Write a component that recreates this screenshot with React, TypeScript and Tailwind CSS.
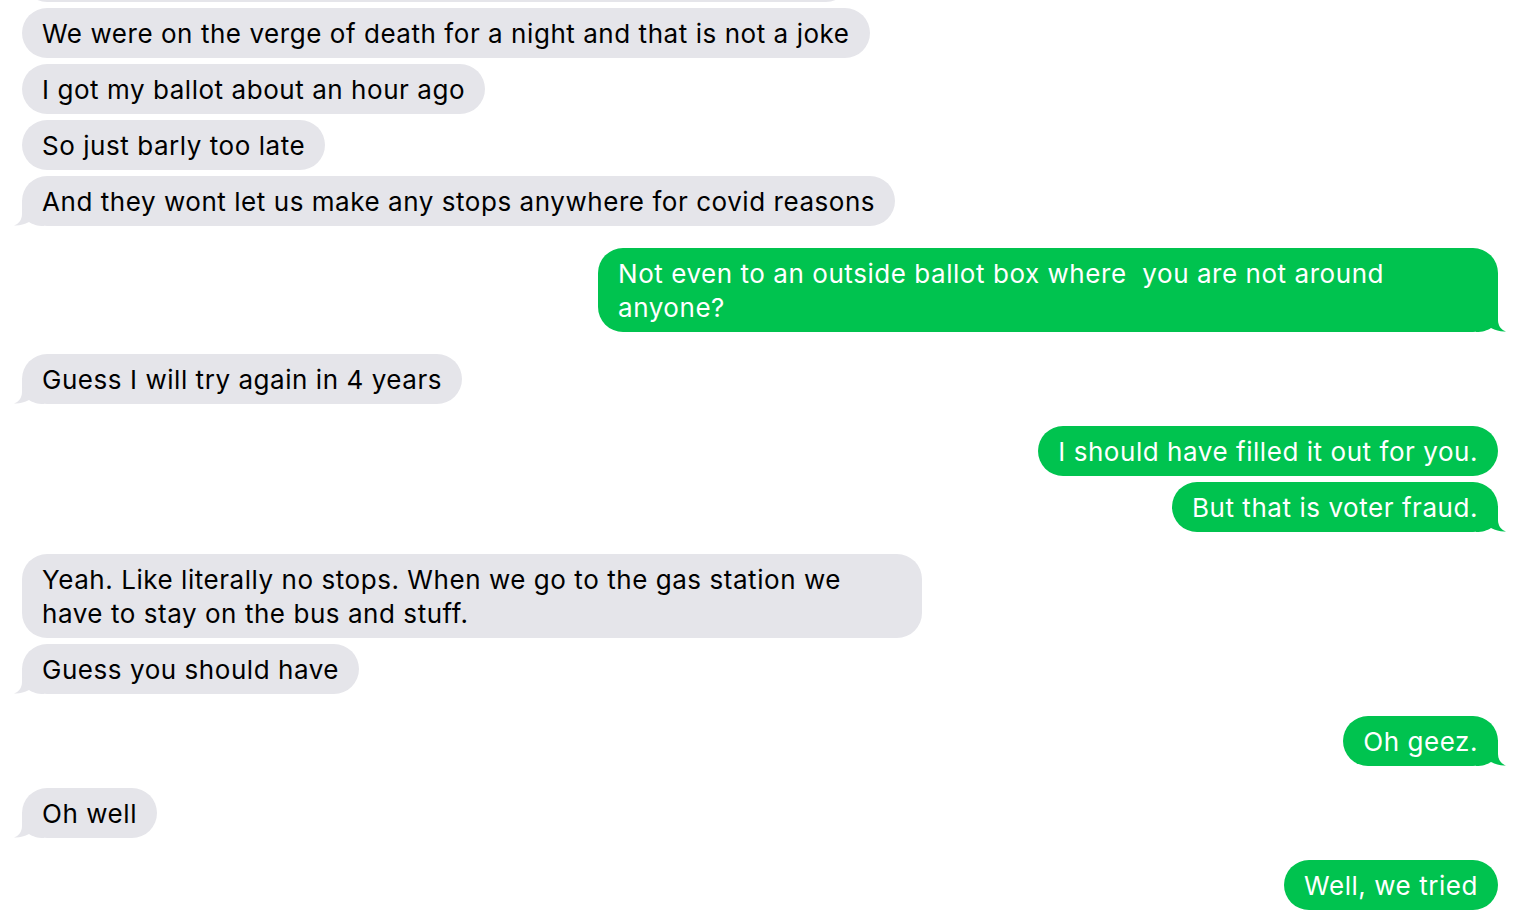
import React from "react";

type Msg = { text: string; me?: boolean; tail?: boolean; gap?: "sm" | "lg"; wide?: boolean };

const messages: Msg[] = [
  { text: "We were on the verge of death for a night and that is not a joke", gap: "sm" },
  { text: "I got my ballot about an hour ago", gap: "sm" },
  { text: "So just barly too late", gap: "sm" },
  { text: "And they wont let us make any stops anywhere for covid reasons", tail: true, gap: "sm" },
  { text: "Not even to an outside ballot box where\u00a0 you are not around anyone?", me: true, tail: true, gap: "lg", wide: true },
  { text: "Guess I will try again in 4 years", tail: true, gap: "lg" },
  { text: "I should have filled it out for you.", me: true, gap: "lg" },
  { text: "But that is voter fraud.", me: true, tail: true, gap: "sm" },
  { text: "Yeah. Like literally no stops. When we go to the gas station we have to stay on the bus and stuff.", gap: "lg", wide: true },
  { text: "Guess you should have", tail: true, gap: "sm" },
  { text: "Oh geez.", me: true, tail: true, gap: "lg" },
  { text: "Oh well", tail: true, gap: "lg" },
  { text: "Well, we tried", me: true, gap: "lg" },
];

function Tail({ me }: { me?: boolean }) {
  return (
    <svg
      width="30"
      height="26"
      viewBox="0 0 30 26"
      className={
        me
          ? "absolute bottom-0 -right-[8px] -scale-x-100"
          : "absolute bottom-0 -left-[8px]"
      }
    >
      <path
        d="M8 0 L8 14 C8 20 4.5 24 0 25.5 C5 26 10 24.5 15 22 C19 24.5 23 26 30 26 L30 0 Z"
        fill={me ? "#00c34f" : "#e5e5ea"}
      />
    </svg>
  );
}

function Bubble({ m }: { m: Msg }) {
  return (
    <div
      className={`relative ${m.gap === "lg" ? "mt-[22px]" : "mt-[6px]"} ${
        m.me ? "self-end" : "self-start"
      }`}
    >
      <div
        className={`relative z-10 rounded-[25px] px-[20px] pt-[9px] pb-[7px] text-[26px] leading-[34px] tracking-[0.55px] ${
          m.me ? "bg-[#00c34f] text-white" : "bg-[#e5e5ea] text-black"
        } ${m.wide ? "w-[900px]" : ""}`}
      >
        {m.text}
      </div>
      {m.tail && <Tail me={m.me} />}
    </div>
  );
}

export default function App() {
  return (
    <div className="h-[914px] w-[1528px] overflow-hidden bg-white font-['Inter',_'Liberation_Sans',_sans-serif]">
      <div className="flex flex-col pl-[22px] pr-[30px]">
        {/* previous message, scrolled mostly off screen */}
        <div className="-mt-[48px] h-[50px] w-[829px] self-start rounded-[25px] bg-[#e5e5ea]" />
        {messages.map((m, i) => (
          <Bubble key={i} m={m} />
        ))}
      </div>
    </div>
  );
}
